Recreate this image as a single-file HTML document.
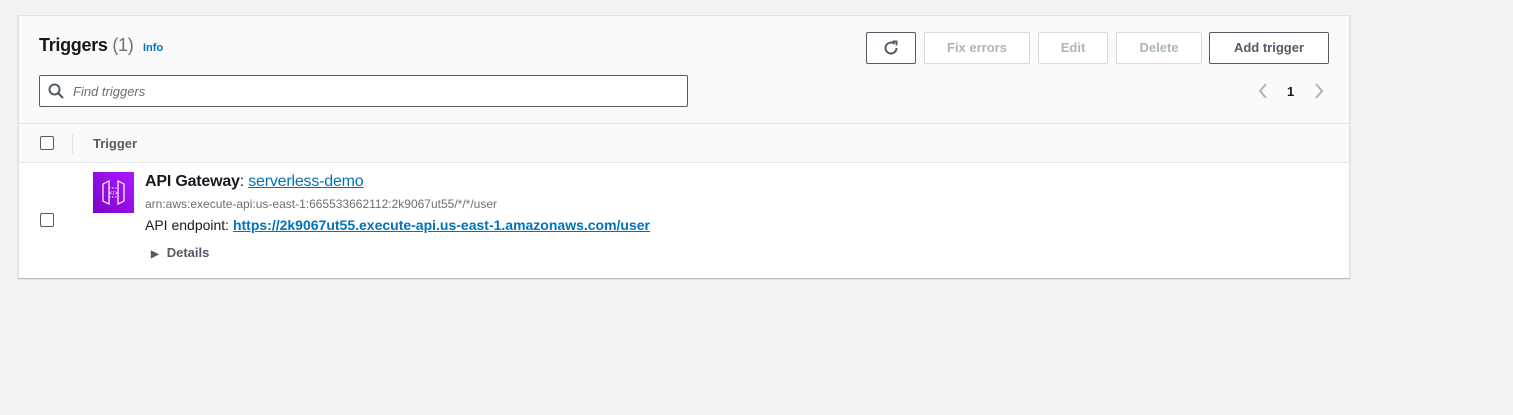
<!DOCTYPE html>
<html><head><style>
*{box-sizing:border-box;margin:0;padding:0}
body{width:1513px;height:415px;background:#f2f3f3;font-family:"Liberation Sans",sans-serif;position:relative;overflow:hidden}
.panel{position:absolute;left:18px;top:15px;width:1332px;height:263px;background:#fafafa;border:1px solid #e1e4e4;box-shadow:0 1px 1px rgba(0,28,36,.3)}
.abs{position:absolute}
.btn{position:absolute;top:16px;height:32px;border:1px solid #d5dbdb;border-radius:2px;background:#fff;font-size:13px;font-weight:bold;color:#aab7b8;text-align:center;line-height:30px}
.dark{border-color:#545b64;color:#545b64}
.cb{position:absolute;width:14px;height:14px;border:1px solid #545b64;border-radius:2px;background:#fff}
a{color:#0073bb}
</style></head><body>
<div class="panel">
 <div class="abs" style="left:20px;top:19px;font-size:18px;font-weight:bold;color:#16191f;letter-spacing:-0.3px">Triggers <span style="font-weight:normal;color:#687078">(1)</span></div>
 <div class="abs" style="left:124px;top:26px;font-size:11px;font-weight:bold;color:#0073bb">Info</div>
 <div class="btn dark" style="left:847px;width:50px"><svg width="18" height="18" viewBox="0 0 18 18" style="margin-top:6px"><path d="M14.5 9a5.5 5.5 0 1 1-2-4.2" fill="none" stroke="#545b64" stroke-width="2"/><path d="M10.5 2.5h4v4" fill="none" stroke="#545b64" stroke-width="2"/></svg></div>
 <div class="btn" style="left:905px;width:106px">Fix errors</div>
 <div class="btn" style="left:1019px;width:70px">Edit</div>
 <div class="btn" style="left:1097px;width:86px">Delete</div>
 <div class="btn dark" style="left:1190px;width:120px;color:#545b64">Add trigger</div>
 <div class="abs" style="left:20px;top:59px;width:649px;height:32px;border:1px solid #545b64;border-radius:2px;background:#fff">
  <svg class="abs" style="left:8px;top:7px" width="16" height="16" viewBox="0 0 16 16"><circle cx="6.5" cy="6.5" r="5" fill="none" stroke="#545b64" stroke-width="2"/><path d="M10 10l5 5" stroke="#545b64" stroke-width="2"/></svg>
  <span class="abs" style="left:33px;top:8px;font-size:13px;font-style:italic;color:#687078">Find triggers</span>
 </div>
 <svg class="abs" style="left:1238px;top:67px" width="12" height="16"><path d="M9 1L3 8l6 7" fill="none" stroke="#aab7b8" stroke-width="2"/></svg>
 <div class="abs" style="left:1268px;top:68px;font-size:13px;font-weight:bold;color:#16191f">1</div>
 <svg class="abs" style="left:1294px;top:67px" width="12" height="16"><path d="M3 1l6 7-6 7" fill="none" stroke="#aab7b8" stroke-width="2"/></svg>
 <div class="abs" style="left:0;top:107px;width:1330px;height:1px;background:#e1e4e4"></div>
 <div class="cb" style="left:21px;top:120px"></div>
 <div class="abs" style="left:53px;top:118px;width:1px;height:20px;background:#e1e4e4"></div>
 <div class="abs" style="left:74px;top:120px;font-size:13px;font-weight:bold;color:#545b64">Trigger</div>
 <div class="abs" style="left:0;top:146px;width:1330px;height:116px;background:#fff;border-top:1px solid #e1e4e4"></div>
 <div class="cb" style="left:21px;top:197px"></div>
 <div class="abs" style="left:74px;top:156px;width:41px;height:41px;background:linear-gradient(45deg,#7e00c8,#a91cff)">
  <svg width="41" height="41" viewBox="0 0 41 41"><path d="M10 12l6-3v23l-6-3zM31 12l-6-3v23l6-3z" fill="none" stroke="#fff" stroke-width="1.2"/><path d="M16 16h9M16 25h9" stroke="#fff" stroke-dasharray="1.5 1.5"/><text x="20.5" y="23" font-size="6" fill="#fff" text-anchor="middle" font-family="Liberation Sans">&lt;/&gt;</text></svg>
 </div>
 <div class="abs" style="left:126px;top:157px;font-size:16px;color:#16191f;letter-spacing:-0.2px"><b>API Gateway</b>: <a href="#">serverless-demo</a></div>
 <div class="abs" style="left:126px;top:181px;font-size:12px;color:#687078">arn:aws:execute-api:us-east-1:665533662112:2k9067ut55/*/*/user</div>
 <div class="abs" style="left:126px;top:201px;font-size:14px;color:#16191f">API endpoint: <a href="#" style="font-weight:bold">https://2k9067ut55.execute-api.us-east-1.amazonaws.com/user</a></div>
 <div class="abs" style="left:132px;top:229px;font-size:13px;font-weight:bold;color:#545b64"><span style="font-size:10px;margin-right:8px">&#9654;</span>Details</div>
</div>
</body></html>
